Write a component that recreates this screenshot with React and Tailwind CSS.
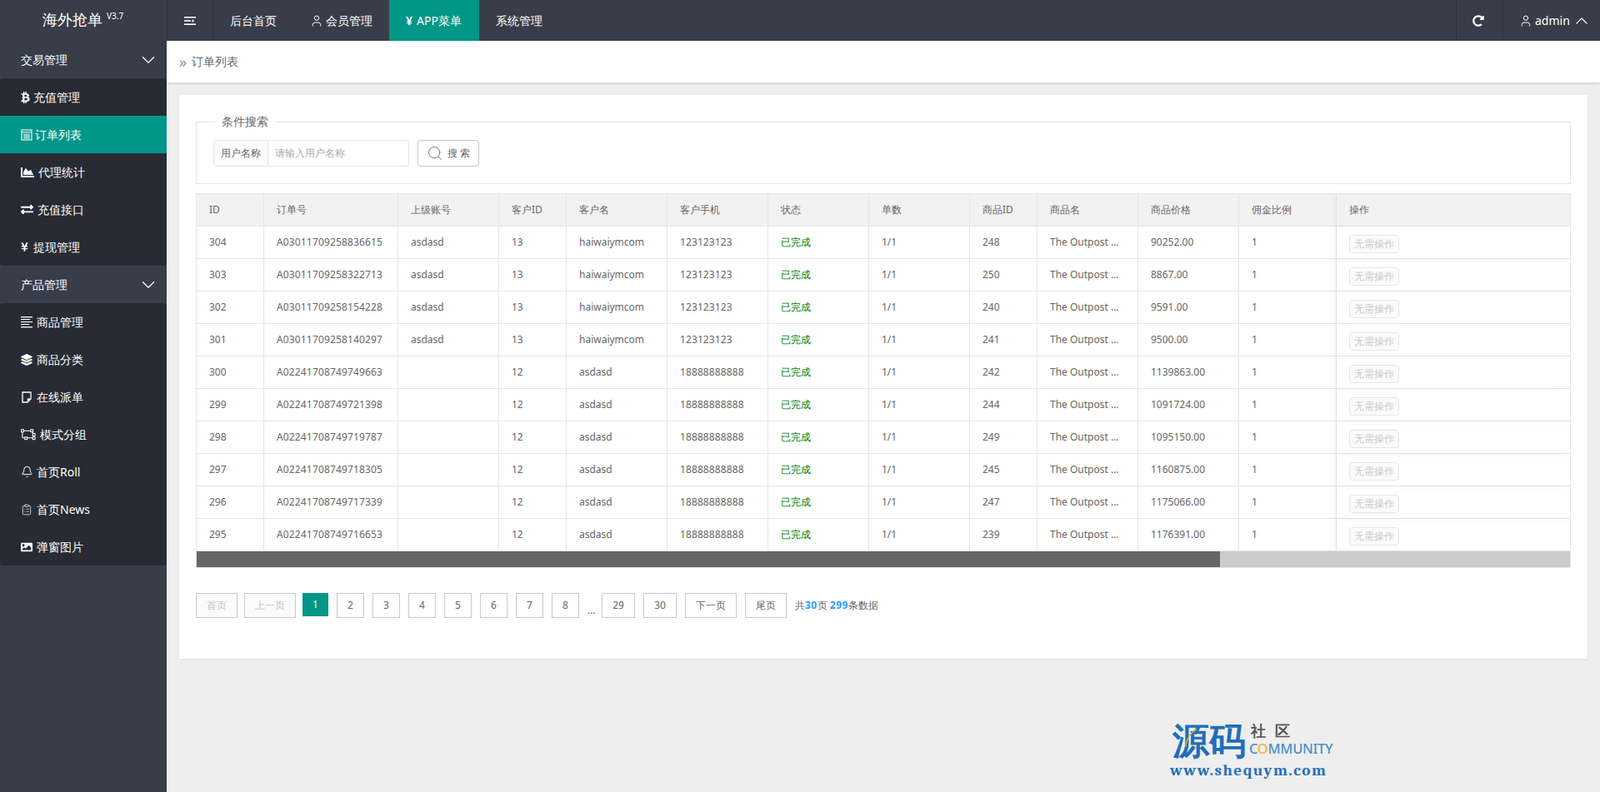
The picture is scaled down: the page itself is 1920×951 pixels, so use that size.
import { User, ChevronDown, ChevronUp, Bell, ClipboardList, Search } from "lucide-react";
import { FaBtc, FaYenSign, FaExchangeAlt, FaChartArea, FaLayerGroup, FaImage, FaRedoAlt } from "react-icons/fa";

const font = "font-['Noto_Sans','Noto_Sans_CJK_SC',sans-serif]";

const orders = [
  [304, "A03011709258836615", "asdasd", 13, "haiwaiymcom", "123123123", 248, "90252.00"],
  [303, "A03011709258322713", "asdasd", 13, "haiwaiymcom", "123123123", 250, "8867.00"],
  [302, "A03011709258154228", "asdasd", 13, "haiwaiymcom", "123123123", 240, "9591.00"],
  [301, "A03011709258140297", "asdasd", 13, "haiwaiymcom", "123123123", 241, "9500.00"],
  [300, "A02241708749749663", "", 12, "asdasd", "18888888888", 242, "1139863.00"],
  [299, "A02241708749721398", "", 12, "asdasd", "18888888888", 244, "1091724.00"],
  [298, "A02241708749719787", "", 12, "asdasd", "18888888888", 249, "1095150.00"],
  [297, "A02241708749718305", "", 12, "asdasd", "18888888888", 245, "1160875.00"],
  [296, "A02241708749717339", "", 12, "asdasd", "18888888888", 247, "1175066.00"],
  [295, "A02241708749716653", "", 12, "asdasd", "18888888888", 239, "1176391.00"],
];

const columns = [
  ["ID", 81], ["订单号", 161], ["上级账号", 121], ["客户ID", 81], ["客户名", 121], ["客户手机", 121],
  ["状态", 121], ["单数", 121], ["商品ID", 81], ["商品名", 121], ["商品价格", 121], ["佣金比例", 117],
];

function AlignIcon({ className }) {
  return (
    <svg viewBox="0 0 15 15" className={className} fill="currentColor">
      <rect x="0" y="0" width="15" height="1.4" />
      <rect x="0" y="3.2" width="12" height="1.2" />
      <rect x="0" y="6.4" width="15" height="1.2" />
      <rect x="0" y="9.6" width="11" height="1.2" />
      <rect x="0" y="13" width="15" height="1.4" />
    </svg>
  );
}

function OrderIcon({ className }) {
  return (
    <svg viewBox="0 0 14 14" className={className} fill="none" stroke="currentColor" strokeWidth="1.1">
      <rect x="1" y="1" width="12" height="12" />
      <path d="M1 3.8h12M3.2 6.2h7.6M3.2 8.4h7.6M3.2 10.6h7.6" />
    </svg>
  );
}

function NoteIcon({ className }) {
  return (
    <svg viewBox="0 0 14 14" className={className} fill="none" stroke="currentColor" strokeWidth="1.3">
      <path d="M2 1h10v8l-4 4H2z" />
      <path d="M12 8.5H7.8V13z" fill="currentColor" stroke="none" />
    </svg>
  );
}

function GroupIcon({ className }) {
  return (
    <svg viewBox="0 0 19 14" className={className} fill="none" stroke="currentColor" strokeWidth="1.1">
      <path d="M2 2h11M2 2v9M14 2l2 4v5M2 11h14" />
      <rect x="0.5" y="0.5" width="3" height="3" fill="#282b33" />
      <rect x="12.5" y="0.5" width="3" height="3" fill="#282b33" />
      <rect x="15" y="5.5" width="3" height="3" fill="#282b33" />
      <rect x="15" y="10" width="3" height="3" fill="#282b33" />
      <rect x="5" y="10" width="3" height="3" fill="#282b33" />
    </svg>
  );
}

function Menu({ title, items }) {
  return (
    <div>
      <div className="h-[45px] pl-[25px] pr-[9px] flex items-center justify-between text-sm text-white">
        {title}
        <ChevronDown className="w-[26px] h-[26px]" strokeWidth={1.1} />
      </div>
      <div className="bg-[#282b33] rounded-sm">
        {items.map((it) => (
          <div
            key={it.label}
            className={`h-[45px] pl-[25px] flex items-center text-sm text-white ${it.active ? "bg-[#009688]" : ""}`}
          >
            <span className={`flex items-center ${it.gap}`}>{it.icon}</span>
            {it.label}
          </div>
        ))}
      </div>
    </div>
  );
}

function PageBtn({ w, children, off, active, gap = "mr-[10px]" }) {
  if (active) {
    return <div className={`${w} ${gap} h-[28px] self-start flex items-center justify-center bg-[#009688] text-white`}>{children}</div>;
  }
  return (
    <div
      className={`${w} ${gap} h-[30px] border border-[#c9c9c9] flex items-center justify-center ${off ? "bg-[#fbfbfb] text-[#c2c2c2]" : "bg-white text-[#666]"}`}
    >
      {children}
    </div>
  );
}

export default function App() {
  return (
    <div className={`relative w-full h-screen overflow-hidden bg-[#eeeeee] ${font}`}>
      {/* header */}
      <div className="h-[49px] bg-[#393d49] flex text-sm text-white">
        <div className="relative w-[201px] border-r border-[#2f323d] shrink-0">
          <span className="absolute left-[51px] top-[10px] text-[18px] leading-[26px]">海外抢单</span>
          <span className="absolute left-[128px] top-[12px] text-[10px] leading-[14px]">V3.7</span>
        </div>
        <div className="w-[55px] border-r border-[#2f323d] flex items-center justify-center">
          <svg viewBox="0 0 14 10" className="w-[14px] h-[10px]" fill="currentColor">
            <rect width="14" height="1.6" />
            <rect y="4.2" width="8" height="1.6" />
            <path d="M9.5 3.2l3 1.8-3 1.8z" />
            <rect y="8.4" width="14" height="1.6" />
          </svg>
        </div>
        <div className="px-5 flex items-center w-[97px]">后台首页</div>
        <div className="pl-[19px] flex items-center w-[114px]">
          <User className="w-[16px] h-[16px] mr-[3px]" strokeWidth={1.5} />
          会员管理
        </div>
        <div className="px-5 flex items-center w-[108px] bg-[#009688]">
          <span className="mr-[5px] font-bold">¥</span>APP菜单
        </div>
        <div className="px-5 flex items-center">系统管理</div>
        <div className="ml-auto flex">
          <div className="w-[56px] border-l border-[#2f323d] flex items-center justify-center pr-[3px]">
            <FaRedoAlt className="w-[14px] h-[14px]" />
          </div>
          <div className="w-[117px] border-l border-[#2f323d] pl-[19px] flex items-center">
            <User className="w-[16px] h-[16px] mr-[3px]" strokeWidth={1.5} />
            admin
            <ChevronUp className="w-[24px] h-[24px] ml-[2px]" strokeWidth={1.2} />
          </div>
        </div>
      </div>

      <div className="flex h-[902px]">
        {/* sidebar */}
        <div className="w-[200px] shrink-0 bg-[#393d49]">
          <Menu
            title="交易管理"
            items={[
              { label: "充值管理", gap: "mr-1", icon: <FaBtc className="w-[11px] h-[14px]" /> },
              { label: "订单列表", gap: "mr-[3px]", active: true, icon: <OrderIcon className="w-[14px] h-[14px]" /> },
              { label: "代理统计", gap: "mr-[5px]", icon: <FaChartArea className="w-[16px] h-[16px]" /> },
              { label: "充值接口", gap: "mr-[5px]", icon: <FaExchangeAlt className="w-[15px] h-[15px]" /> },
              { label: "提现管理", gap: "mr-[6px]", icon: <FaYenSign className="w-[9px] h-[13px]" /> },
            ]}
          />
          <Menu
            title="产品管理"
            items={[
              { label: "商品管理", gap: "mr-[5px]", icon: <AlignIcon className="w-[14px] h-[14px]" /> },
              { label: "商品分类", gap: "mr-[5px]", icon: <FaLayerGroup className="w-[14px] h-[14px]" /> },
              { label: "在线派单", gap: "mr-[5px]", icon: <NoteIcon className="w-[14px] h-[14px]" /> },
              { label: "模式分组", gap: "mr-[5px]", icon: <GroupIcon className="w-[18px] h-[14px]" /> },
              { label: "首页Roll", gap: "mr-[4px]", icon: <Bell className="w-[15px] h-[15px]" strokeWidth={1.6} /> },
              { label: "首页News", gap: "mr-[5px]", icon: <ClipboardList className="w-[14px] h-[14px] opacity-80" strokeWidth={1.6} /> },
              { label: "弹窗图片", gap: "mr-[5px]", icon: <FaImage className="w-[14px] h-[14px]" /> },
            ]}
          />
        </div>

        {/* content */}
        <div className="flex-1 min-w-0">
          <div className="h-[50px] bg-white shadow-[0_1px_4px_rgba(0,0,0,0.15)] pl-[15px] flex items-center text-sm text-[#666]">
            <span className="text-[#a08c80] w-[15px] text-[18px] leading-[20px]">»</span>
            订单列表
          </div>

          <div className="mt-[15px] ml-[15px] mr-[15px] w-[1690px] h-[677px] bg-white px-[20px] pt-[32px] shadow-[0_1px_3px_rgba(0,0,0,0.06)]">
            <div className="relative h-[75px] border border-[#e6e6e6]">
              <span className="absolute left-[22px] -top-[11px] bg-white px-[8px] text-sm leading-[20px] text-[#666]">条件搜索</span>
              <div className="absolute left-[20px] top-[21px] flex h-[32px] text-xs">
                <div className="w-[66px] border border-[#e6e6e6] bg-[#fbfbfb] rounded-l-sm flex items-center justify-center text-[#666]">
                  用户名称
                </div>
                <div className="w-[169px] border border-l-0 border-[#e6e6e6] rounded-r-sm flex items-center pl-2 text-[#aaaaaa]">
                  请输入用户名称
                </div>
                <div className="ml-[10px] w-[74px] border border-[#c9c9c9] rounded-sm flex items-center justify-center text-[#666]">
                  <Search className="w-[20px] h-[20px] mr-[5px] text-[#777]" strokeWidth={1.2} />
                  搜 索
                </div>
              </div>
            </div>

            <div className="mt-[11px] w-[1650px] border border-[#e6e6e6] text-xs text-[#666]">
              <table className="table-fixed w-[1648px] border-separate border-spacing-0">
                <colgroup>
                  {columns.map((c) => (
                    <col key={c[0]} style={{ width: c[1] }} />
                  ))}
                  <col />
                </colgroup>
                <thead>
                  <tr className="bg-[#f2f2f2] h-[39px]">
                    {columns.map((c) => (
                      <th key={c[0]} className="font-normal text-left pl-[15px] border-r border-b border-[#e6e6e6]">
                        {c[0]}
                      </th>
                    ))}
                    <th className="font-normal text-left pl-[15px] border-b border-[#e6e6e6] shadow-[-4px_0_8px_rgba(0,0,0,0.04)]">操作</th>
                  </tr>
                </thead>
                <tbody>
                  {orders.map((o) => (
                    <tr key={o[0]} className="h-[39px]">
                      <td className="pl-[15px] border-r border-b border-[#e6e6e6]">{o[0]}</td>
                      <td className="pl-[15px] border-r border-b border-[#e6e6e6] tracking-[0.15px]">{o[1]}</td>
                      <td className="pl-[15px] border-r border-b border-[#e6e6e6]">{o[2]}</td>
                      <td className="pl-[15px] border-r border-b border-[#e6e6e6]">{o[3]}</td>
                      <td className="pl-[15px] border-r border-b border-[#e6e6e6]">{o[4]}</td>
                      <td className="pl-[15px] border-r border-b border-[#e6e6e6] tracking-[0.1px]">{o[5]}</td>
                      <td className="pl-[15px] border-r border-b border-[#e6e6e6] text-[#008000]">已完成</td>
                      <td className="pl-[15px] border-r border-b border-[#e6e6e6]">1/1</td>
                      <td className="pl-[15px] border-r border-b border-[#e6e6e6]">{o[6]}</td>
                      <td className="pl-[15px] border-r border-b border-[#e6e6e6]">
                        <div className="w-[90px] truncate">The Outpost ...</div>
                      </td>
                      <td className="pl-[15px] border-r border-b border-[#e6e6e6]">{o[7]}</td>
                      <td className="pl-[15px] border-r border-b border-[#e6e6e6]">1</td>
                      <td className="pl-[15px] border-b border-[#e6e6e6] shadow-[-4px_0_8px_rgba(0,0,0,0.04)]">
                        <div className="mt-[4px] w-[60px] h-[22px] border border-[#e6e6e6] rounded-sm bg-[#fbfbfb] text-[#c9c9c9] flex items-center justify-center">
                          无需操作
                        </div>
                      </td>
                    </tr>
                  ))}
                </tbody>
              </table>
              <div className="h-[19px] bg-[#cbcbcb]">
                <div className="h-full w-[1228px] bg-[#666666]" />
              </div>
            </div>

            <div className="mt-[30px] flex items-center text-xs">
              <PageBtn w="w-[50px]" gap="mr-[8px]" off>首页</PageBtn>
              <PageBtn w="w-[62px]" gap="mr-[8px]" off>上一页</PageBtn>
              <PageBtn w="w-[31px]" active>1</PageBtn>
              <PageBtn w="w-[33px]">2</PageBtn>
              <PageBtn w="w-[33px]">3</PageBtn>
              <PageBtn w="w-[33px]">4</PageBtn>
              <PageBtn w="w-[33px]">5</PageBtn>
              <PageBtn w="w-[33px]">6</PageBtn>
              <PageBtn w="w-[33px]">7</PageBtn>
              <PageBtn w="w-[33px]">8</PageBtn>
              <span className="w-[17px] text-[#666] self-end leading-[18px]">...</span>
              <PageBtn w="w-[40px]">29</PageBtn>
              <PageBtn w="w-[40px]">30</PageBtn>
              <PageBtn w="w-[62px]">下一页</PageBtn>
              <PageBtn w="w-[50px]">尾页</PageBtn>
              <span className="text-[#666]">
                共<b className="text-[#1e9fff] tracking-[0.5px]">30</b>页 <b className="text-[#1e9fff] tracking-[0.5px]">299</b>条数据
              </span>
            </div>
          </div>
        </div>
      </div>

      {/* watermark */}
      <div className="absolute left-[1404px] top-[862px] w-[210px] h-[76px]">
        <span className="absolute left-[3px] top-0 text-[44px] leading-[52px] font-bold text-[#1f6fb9]">源码</span>
        <svg viewBox="0 0 20 30" className="absolute left-[17px] top-[10px] w-[16px] h-[28px]" fill="none" stroke="#f5b32c" strokeWidth="1.6">
          <path d="M2 28C4 16 10 6 19 2" />
        </svg>
        <span className="absolute left-[97px] top-[5px] text-[18px] leading-[20px] font-bold tracking-[11px] text-[#555]">社区</span>
        <span className="absolute left-[95px] top-[28px] text-[16.5px] leading-[18px] font-medium text-[#4c8fc9] tracking-[-0.3px]">
          C<span className="text-[#f2b233]">O</span>MMUNITY
        </span>
        <span className="absolute left-0 top-[52px] font-serif text-[19px] leading-[22px] font-bold tracking-[1.55px] text-[#1f6fb9]">www.shequym.com</span>
      </div>
    </div>
  );
}
